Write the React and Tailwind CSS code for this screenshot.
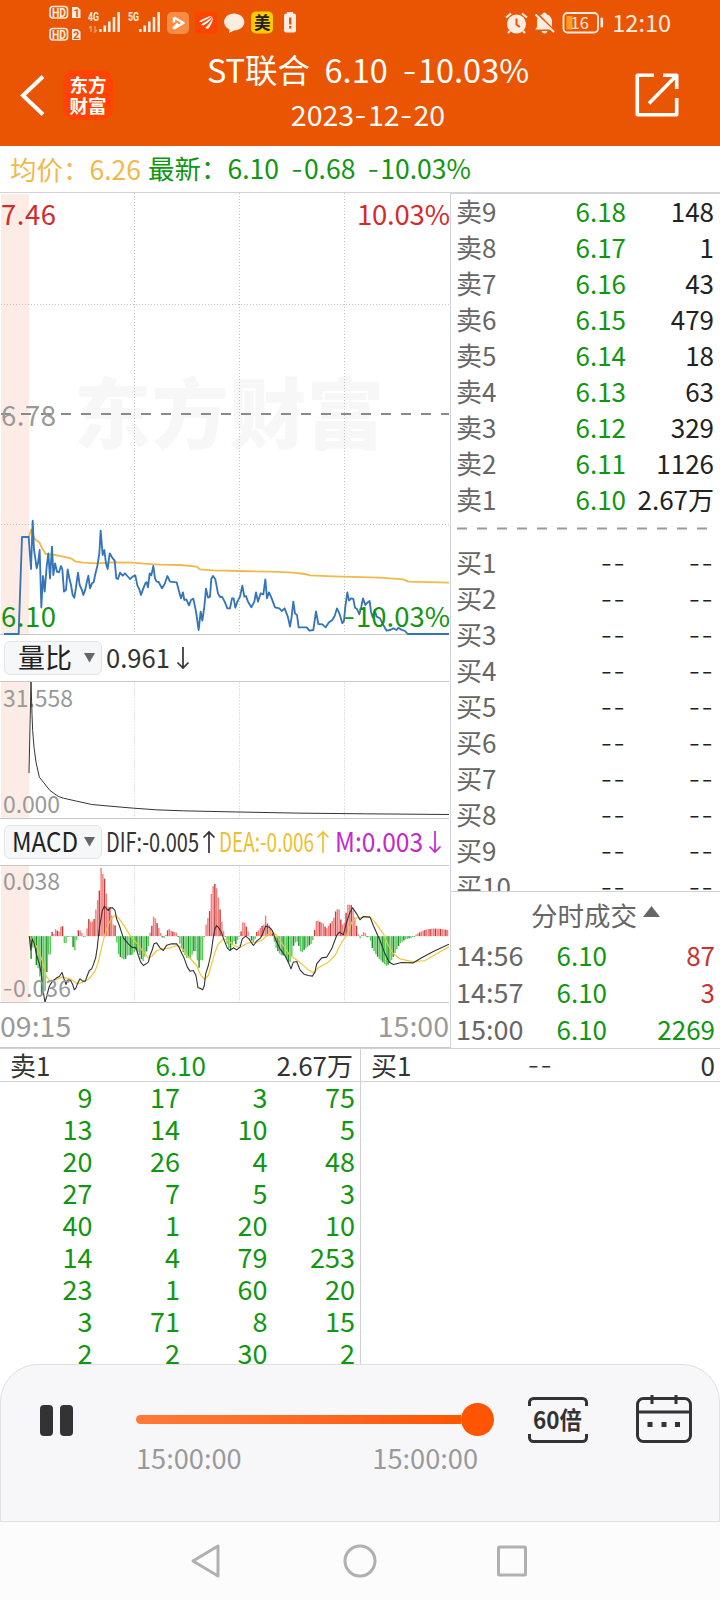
import clsx from 'clsx'

const sells = [
  ['卖9', '6.18', '148'],
  ['卖8', '6.17', '1'],
  ['卖7', '6.16', '43'],
  ['卖6', '6.15', '479'],
  ['卖5', '6.14', '18'],
  ['卖4', '6.13', '63'],
  ['卖3', '6.12', '329'],
  ['卖2', '6.11', '1126'],
  ['卖1', '6.10', '2.67万'],
]

const buys = ['买1', '买2', '买3', '买4', '买5', '买6', '买7', '买8', '买9', '买10']

const deals = [
  { time: '14:56', price: '6.10', vol: '87', up: true },
  { time: '14:57', price: '6.10', vol: '3', up: true },
  { time: '15:00', price: '6.10', vol: '2269', up: false },
]

const queue = [
  [9, 17, 3, 75],
  [13, 14, 10, 5],
  [20, 26, 4, 48],
  [27, 7, 5, 3],
  [40, 1, 20, 10],
  [14, 4, 79, 253],
  [23, 1, 60, 20],
  [3, 71, 8, 15],
  [2, 2, 30, 2],
]

// chart series, three units per pixel
const priceLine = '12,402 56,402 66,111 86,111 93,207 98,62 102,150 106,175 110,205 114,190 119,150 124,322 129,228 134,275 140,200 145,160 150,235 156,140 160,225 165,190 171,215 177,217 183,198 187,208 192,275 198,270 203,208 208,235 213,255 218,285 223,293 228,262 234,218 239,255 245,268 250,285 256,268 260,248 265,227 270,265 276,250 281,247 286,222 292,198 298,160 302,92 308,165 313,150 318,190 323,207 329,160 336,172 344,182 349,235 354,237 360,218 368,227 375,220 382,228 390,237 398,230 406,226 412,256 418,268 423,285 430,265 436,250 440,247 444,262 449,220 454,226 460,198 465,235 470,245 476,246 486,265 494,252 502,228 510,245 530,247 536,270 543,295 549,277 553,300 559,298 567,316 573,300 580,296 588,335 596,390 602,335 607,362 613,320 618,266 624,293 630,290 634,236 639,228 646,238 654,280 660,291 666,290 674,305 682,325 690,325 696,295 701,295 706,323 712,305 720,290 727,257 733,290 738,288 744,305 754,322 763,305 768,277 774,305 782,280 790,283 796,238 801,295 807,277 815,295 825,322 838,325 845,333 854,325 864,352 870,380 875,350 880,305 885,340 891,345 896,382 920,382 928,392 940,390 948,334 955,372 967,373 977,382 987,367 997,360 1004,348 1011,325 1018,340 1027,370 1032,362 1036,320 1042,277 1047,302 1053,295 1060,297 1065,323 1071,327 1078,343 1084,320 1089,295 1096,315 1102,308 1109,303 1113,335 1118,352 1124,330 1130,350 1140,355 1150,375 1160,392 1170,390 1180,385 1190,390 1195,383 1202,388 1215,393 1223,402 1347,402'
const avgLine = '86,112 94,88 100,108 107,120 118,127 128,148 137,162 165,165 190,170 215,176 225,184 250,188 290,190 340,187 400,188 430,191 480,194 540,195 590,200 600,208 640,211 720,213 810,215 880,218 915,222 930,226 1000,229 1140,233 1210,238 1225,245 1347,248'
const ratioLine = '87,308 93,32 96,130 98,180 102,230 108,275 118,320 130,335 150,360 175,378 190,383 230,392 275,402 330,407 400,413 470,418 550,421 690,424 900,428 1100,430 1347,432'
const difLine = '88,257 92,298 97,265 103,280 110,315 118,340 124,370 129,420 135,455 141,435 147,410 152,400 160,390 170,382 178,378 186,366 192,385 198,402 204,388 212,390 218,402 223,418 228,412 233,398 240,385 248,392 256,392 262,375 268,360 275,355 281,340 287,322 292,290 297,240 302,210 307,180 313,167 320,175 325,180 330,172 338,172 345,180 350,205 358,225 370,262 385,280 395,290 408,292 415,315 422,335 430,345 438,340 445,335 450,315 456,300 462,280 470,277 480,292 490,300 500,284 515,280 530,280 537,290 545,308 552,322 562,350 570,362 580,360 588,375 594,412 600,413 608,418 613,405 617,370 625,345 633,310 640,260 645,235 650,225 656,232 664,245 672,268 682,293 690,300 700,292 710,298 720,290 727,265 737,257 747,265 760,285 770,272 782,262 790,245 797,227 808,230 817,240 828,270 840,295 855,315 867,340 873,355 880,335 890,333 900,358 912,371 925,375 937,377 945,365 950,340 965,322 980,320 995,295 1010,255 1018,245 1030,253 1040,215 1050,185 1058,172 1070,190 1080,208 1090,198 1110,200 1120,225 1140,270 1155,310 1168,335 1180,342 1205,336 1240,337 1265,322 1300,303 1347,281'
const deaLine = '88,257 98,272 108,285 118,305 128,335 138,375 148,390 165,388 185,380 210,385 232,400 255,393 270,382 285,362 295,335 305,290 315,250 325,222 335,203 345,195 358,205 375,230 395,262 415,283 430,305 445,322 455,318 470,300 490,295 510,292 530,285 545,292 565,318 590,345 600,370 613,387 625,375 635,340 645,305 655,280 670,265 685,270 700,285 720,291 745,277 765,276 785,270 800,255 815,243 830,255 850,285 870,315 885,325 905,340 925,358 940,367 955,352 985,335 1005,315 1025,275 1040,255 1055,215 1070,202 1110,200 1125,215 1150,250 1165,285 1180,310 1200,325 1240,334 1275,330 1310,310 1347,289'

const macdShape = [
  [88, 0], [93, -70], [98, -35], [103, -25], [108, -85], [114, -95], [119, -115], [124, -175], [134, -177], [139, -125], [145, -55], [151, -55],
  [153, 0], [155, 17], [160, 0], [165, 22], [171, 17], [177, 13], [182, 28], [188, 30], [191, 0], [192, -17], [197, -35], [200, 0], [214, 0],
  [218, -28], [223, -48], [228, -28], [231, 0], [233, 17], [238, 19], [244, 14], [249, 0], [258, 0], [261, 22], [266, 52], [272, 43], [281, 45],
  [287, 77], [292, 104], [298, 137], [302, 209], [308, 188], [313, 179], [318, 136], [324, 88], [329, 88], [334, 66], [340, 35], [345, 37],
  [347, 0], [350, -15], [355, -52], [360, -62], [371, -70], [377, -68], [381, -58], [400, -55], [407, -40], [418, -55], [428, -78], [435, -60],
  [445, -30], [447, 0], [450, 10], [455, 28], [460, 59], [465, 56], [471, 40], [476, 26], [481, 12], [486, -3], [491, -7], [496, 0], [502, 17],
  [508, 21], [515, 15], [530, 10], [535, -5], [541, -28], [550, -48], [560, -65], [573, -65], [580, -45], [588, -45], [596, -100], [603, -70],
  [609, -73], [613, 0], [616, 26], [622, 50], [628, 66], [632, 116], [638, 148], [644, 158], [650, 143], [655, 116], [661, 75], [666, 40],
  [672, 10], [676, 0], [680, -20], [690, -45], [696, -30], [700, -12], [708, -25], [715, -5], [722, 5], [727, 42], [735, 40], [742, 20],
  [748, 5], [752, -10], [760, -18], [766, -8], [770, 12], [778, 20], [785, 30], [792, 35], [796, 65], [802, 38], [808, 32], [815, 20], [820, 0],
  [825, -28], [835, -48], [845, -58], [855, -58], [862, -75], [868, -83], [874, -70], [880, -30], [888, -15], [894, -18], [900, -45],
  [907, -48], [915, -38], [925, -30], [935, -22], [939, -10], [942, 0], [946, 43], [952, 48], [960, 43], [970, 38], [979, 22], [988, 35],
  [1000, 50], [1007, 75], [1013, 82], [1018, 80], [1024, 40], [1030, 32], [1036, 50], [1041, 95], [1055, 93], [1060, 75], [1066, 50],
  [1072, 20], [1078, -10], [1084, 0], [1091, 13], [1097, 8], [1102, -5], [1110, 0], [1114, -30], [1125, -50], [1135, -65], [1150, -80],
  [1160, -90], [1170, -80], [1180, -62], [1190, -40], [1200, -22], [1215, -10], [1235, -4], [1243, 0], [1250, 6], [1265, 15], [1280, 20],
  [1300, 23], [1320, 22], [1347, 18],
]

const macdAt = x => {
  const i = macdShape.findIndex(p => p[0] >= x)
  if (i <= 0) return 0
  const [x0, y0] = macdShape[i - 1]
  const [x1, y1] = macdShape[i]
  return y0 + ((y1 - y0) * (x - x0)) / (x1 - x0)
}

const macdBars = Array.from({ length: 240 }, (_, i) => {
  const x = 88 + i * 5.25
  return { x, v: macdAt(x), dark: i % 3 === 1 }
})

const barColor = ({ v, dark }) => {
  if (v > 0) return dark ? '#c04040' : '#f87c7c'
  return dark ? '#178f22' : '#5cc860'
}

const Dash = ({ children = '-' }) => (
  <span className="font-['Inter',sans-serif] font-light tracking-[1px]">{children}</span>
)

const VerticalGrid = ({ height }) => (
  <g stroke="#c4c4c4" strokeDasharray="1 2">
    <line x1="134.5" x2="134.5" y1="0" y2={height} />
    <line x1="239.5" x2="239.5" y1="0" y2={height} />
    <line x1="344.5" x2="344.5" y1="0" y2={height} />
  </g>
)

const StatusBar = () => (
  <div className="flex h-[46px] items-center justify-between pl-12 pr-[49px] text-[#ffece0]">
    <svg width="252" height="46" viewBox="48 0 252 46" fill="currentColor" fontFamily="Roboto, sans-serif">
      <g fill="none" stroke="currentColor" strokeWidth="1.6">
        <rect x="50" y="6.5" width="17.5" height="11.5" rx="3" />
        <rect x="50" y="28.5" width="17.5" height="11.5" rx="3" />
      </g>
      <text x="52" y="16.5" fontSize="12" fontWeight="700" textLength="14" lengthAdjust="spacingAndGlyphs">HD</text>
      <text x="52" y="38.5" fontSize="12" fontWeight="700" textLength="14" lengthAdjust="spacingAndGlyphs">HD</text>
      <path d="M72 7h5.500l3 2.500V18H72z M72 29h5.500l3 2.500V40H72z" />
      <text x="73.500" y="16.5" fontSize="11" fontWeight="700" fill="#ea5504">1</text>
      <text x="73" y="38.5" fontSize="11" fontWeight="700" fill="#ea5504">2</text>
      <text x="88" y="21" fontSize="12" fontWeight="700" textLength="11" lengthAdjust="spacingAndGlyphs">4G</text>
      <text x="128" y="21" fontSize="12" fontWeight="700" textLength="11" lengthAdjust="spacingAndGlyphs">5G</text>
      <path d="M91 26v6M89 28l2-2M95 26v6l2-2" stroke="currentColor" fill="none" opacity=".5" strokeWidth="1.3" />
      <path d="M99 29h2.600v3H99zM103.500 25.500h2.600v6.500h-2.600zM108 21.500h2.600v10.500h-2.600zM112.700 17h2.600v15h-2.600zM117.400 12h2.600v20h-2.600z" />
      <path d="M139 29h2.600v3H139zM143.500 25.500h2.600v6.500h-2.600zM148 21.500h2.600v10.500h-2.600zM152.700 17h2.600v15h-2.600zM157.400 12h2.600v20h-2.600z" />
      <rect x="167" y="12" width="22" height="22" rx="5" fill="#fa8c46" />
      <path d="M174 17.500l9.500 5.500-9.500 5.500M174 17.500v5M173 28.500l5-5" fill="none" stroke="#fff" strokeWidth="2.4" strokeLinejoin="round" />
      <rect x="195" y="12" width="22" height="22" fill="#ff4400" />
      <path d="M199 21.500q7-5 13-5.500-4 3-11 6zM201 24.500q7-4 11.500-8-2 5-9 9zM205 28q5-4 8-11 0 6-5 12z" fill="#fff" />
      <path d="M234 13.500c5.800 0 10.300 3.800 10.300 8.500s-4.500 8.500-10.300 8.500l-5 2.500.5-3.500c-3-1.500-5.400-4.200-5.400-7.500 0-4.700 4.200-8.500 9.900-8.500z" />
      <rect x="251" y="11.500" width="22" height="22" rx="5" fill="#fc0" />
      <text x="254" y="28.500" fontSize="16.5" fontWeight="700" fill="#222" fontFamily="'Noto Sans CJK SC', sans-serif">美</text>
      <rect x="287" y="12" width="6" height="3" />
      <rect x="284" y="13.500" width="12" height="19" rx="2" />
      <path d="M289 17.500h2.400v7H289zM289 26h2.400v2.400H289z" fill="#ea5504" />
    </svg>

    <div className="flex items-center">
      <svg width="100" height="46" viewBox="507 0 100 46" fill="currentColor">
        <circle cx="518.500" cy="24" r="9.500" />
        <path d="M508 17.500l5-4M529 17.500l-5-4M512 31l-2 2M525 31l2 2" stroke="currentColor" strokeWidth="2.200" />
        <path d="M518.500 18.500v6l3.500 2.500" fill="none" stroke="#ea5504" strokeWidth="2" />
        <path d="M546.500 12.500c1.200 0 2 .8 2 1.800 3.400 1 5.500 3.800 5.500 7.200v5.500l1.800 2.500h-18.600l1.800-2.500v-5.500c0-3.400 2.100-6.200 5.500-7.200 0-1 .8-1.800 2-1.800z" />
        <path d="M543.500 31h6q-.8 2.500-3 2.500t-3-2.500z" />
        <path d="M539.500 14l18 18" stroke="#ea5504" strokeWidth="2.200" />
        <path d="M537.500 14.500L556 32" stroke="currentColor" strokeWidth="2.200" />
        <rect x="565.500" y="13" width="34.500" height="19.500" rx="4" fill="none" stroke="currentColor" strokeWidth="1.800" />
        <rect x="568.500" y="16" width="6" height="13.500" rx="1" fill="#ffa01e" />
        <rect x="602.500" y="17.500" width="2.600" height="10" rx="1" />
        <text x="572.500" y="29" fontSize="16.5" fontFamily="'Noto Sans CJK SC', sans-serif">16</text>
      </svg>
      <span className="ml-[7px] text-[23.5px] leading-none">12:10</span>
    </div>
  </div>
)

const Header = () => (
  <header className="h-[146px] bg-[#ea5504] text-white">
    <StatusBar />
    <div className="flex h-[100px] items-start pl-5 pr-[41px]">
      <div className="flex pt-6">
        <svg width="26" height="52" viewBox="0 0 26 52" fill="none" stroke="#fff" strokeWidth="4">
          <path d="M23 6.500L3 25.500 23 44.500" />
        </svg>
        <div className="ml-[17px] flex size-[50px] flex-col items-center justify-center rounded-xl bg-[#ff4400] text-[18.5px] font-bold leading-[21px]">
          <span>东方</span>
          <span>财富</span>
        </div>
      </div>
      <div className="ml-[73px] w-[364px] text-center">
        <h1 className="h-[48px] whitespace-pre text-[32.5px] leading-[46px]">ST联合  6.10  <Dash />10.03%</h1>
        <p className="text-[28.5px] leading-[40px]">2023<Dash />12<Dash />20</p>
      </div>
      <svg className="ml-auto mt-[27px]" width="44" height="44" viewBox="0 0 44 44" fill="none" stroke="#fff" strokeWidth="3.600" strokeLinejoin="round">
        <path d="M19 2.300H2.300v39.400h39.400V25" />
        <path d="M28 2.300h13.700V16M41 3L14 30.500" />
      </svg>
    </div>
  </header>
)

const PriceChart = () => (
  <svg className="block" width="450" height="442" viewBox="0 193 450 442">
    <rect x="1" y="194" width="28" height="440" fill="#fdece5" />
    <text x="74" y="443" fontSize="77" fontWeight="900" fill="#f7f7f7" textLength="310">东方财富</text>
    <g transform="translate(0 193)"><VerticalGrid height={441} /></g>
    <g stroke="#c4c4c4" strokeDasharray="1 2">
      <line x1="1" x2="449" y1="304.500" y2="304.500" />
      <line x1="1" x2="449" y1="524.500" y2="524.500" />
    </g>
    <line x1="1" x2="449" y1="414" y2="414" stroke="#8a8a8a" strokeWidth="2" strokeDasharray="10 10" strokeDashoffset="0" />
    <line x1="0" x2="449" y1="634.500" y2="634.500" stroke="#c8c8c8" />
    <g transform="translate(0 500) scale(.33333)" fill="none" strokeLinejoin="round">
      <polyline points={avgLine} stroke="#f0b94a" strokeWidth="5.500" />
      <polyline points={priceLine} stroke="#3474b8" strokeWidth="5.500" />
    </g>
    <g fontSize="27.500">
      <text x="1" y="225" fill="#d42a2a" textLength="55">7.46</text>
      <text x="450" y="225" fill="#d42a2a" textAnchor="end" textLength="93">10.03%</text>
      <text x="1" y="425.500" fill="#999" textLength="55">6.78</text>
      <text x="1" y="626.500" fill="#109610" textLength="55">6.10</text>
      <text x="356" y="626.500" fill="#109610" textLength="94">10.03%</text>
      <text x="343" y="626.500" fill="#109610" fontFamily="Inter, sans-serif" fontWeight="300">-</text>
    </g>
  </svg>
)

const RatioChart = () => (
  <svg className="block border-y border-[#c8c8c8]" width="449" height="138" viewBox="0 681.500 449 136">
    <rect x="1" y="681" width="28" height="138" fill="#fdece5" />
    <g transform="translate(0 682)"><VerticalGrid height={136} /></g>
    <g fontSize="23" fill="#999">
      <text x="3" y="706" textLength="70">31.558</text>
      <text x="3" y="812.500" textLength="57">0.000</text>
    </g>
    <polyline transform="translate(0 670) scale(.33333)" points={ratioLine} fill="none" stroke="#333" strokeWidth="3" />
  </svg>
)

const MacdChart = () => (
  <svg className="block border-y border-[#c8c8c8]" width="449" height="138" viewBox="0 865.500 449 136">
    <rect x="1" y="865" width="28" height="138" fill="#fdece5" />
    <g transform="translate(0 866)"><VerticalGrid height={136} /></g>
    <g transform="translate(0 850) scale(.33333)" fill="none" strokeLinejoin="round">
      {macdBars.map(b => (
        <rect
          key={b.x}
          x={b.x - 2.1}
          y={b.v > 0 ? 257 - b.v : 257}
          width="4.300"
          height={Math.max(2, Math.abs(b.v))}
          fill={barColor(b)}
        />
      ))}
      <polyline points={deaLine} stroke="#ecc83a" strokeWidth="3.600" />
      <polyline points={difLine} stroke="#333" strokeWidth="3.300" />
    </g>
    <g fontSize="23" fill="#999">
      <text x="3" y="889.500" textLength="57">0.038</text>
      <text x="13" y="996.500" textLength="58">0.036</text>
      <text x="2.500" y="996.500" fontFamily="Inter, sans-serif" fontWeight="300">-</text>
    </g>
  </svg>
)

const Picker = ({ children, className }) => (
  <div className={clsx('flex h-[34px] w-[98px] flex-none items-center justify-between rounded-md border border-[#e0e2e6] bg-[#f6f7f9] pr-[6px] text-[#222]', className)}>
    {children}
    <svg width="11" height="10" viewBox="0 0 11 10" fill="#666"><path d="M0 0h11L5.500 9.500z" /></svg>
  </div>
)

const Arrow = ({ up }) => (
  <svg className="ml-[2px] flex-none" width="14" height="24" viewBox="0 0 14 24" fill="none" stroke="currentColor" strokeWidth="1.700">
    {up ? <path d="M7 23V2M1.500 7.500L7 2l5.500 5.500" /> : <path d="M7 1v21M1.500 16.500L7 22l5.500-5.500" />}
  </svg>
)

const Narrow = ({ children, width }) => (
  <svg className="flex-none overflow-visible" width={width} height="42" fill="currentColor" fontSize="27">
    <text x="0" y="30.5" textLength={width} lengthAdjust="spacingAndGlyphs">{children}</text>
  </svg>
)

const Charts = () => (
  <section className="w-[450px] flex-none">
    <PriceChart />
    <div className="flex h-[46px] items-center pl-1">
      <Picker className="pl-[13px]"><Narrow width={54}>量比</Narrow></Picker>
      <span className="ml-[4px] text-[#333]"><Narrow width={64}>0.961</Narrow></span>
      <span className="ml-[4px] text-[#333]"><Arrow /></span>
    </div>
    <RatioChart />
    <div className="flex h-[46px] items-center pl-1">
      <Picker className="pl-[7px]"><Narrow width={66}>MACD</Narrow></Picker>
      <div className="ml-[4px] flex items-center text-[#333]"><Narrow width={93}>DIF:-0.005</Narrow><span className="ml-[1px]"><Arrow up /></span></div>
      <div className="ml-[3px] flex items-center text-[#ecc02e]"><Narrow width={95}>DEA:-0.006</Narrow><Arrow up /></div>
      <div className="ml-[5px] flex items-center text-[#c328c8]"><Narrow width={88}>M:0.003</Narrow><span className="ml-[3px]"><Arrow /></span></div>
    </div>
    <MacdChart />
    <div className="flex h-[45px] items-center justify-between border-b border-[#c8c8c8] pr-[1px] text-[28.5px] leading-[40px] text-[#999]">
      <span>09:15</span>
      <span>15:00</span>
    </div>
  </section>
)

const BookRow = ({ label, price, vol }) => (
  <div className="flex h-9 items-start text-[26px] leading-[33px]">
    <span className="w-[80px] text-[#666]">{label}</span>
    <span className="w-[90px] text-right text-[#109610]">{price}</span>
    <span className="flex-1 text-right text-[#222]">{vol}</span>
  </div>
)

const OrderBook = () => (
  <section className="flex min-w-0 flex-1 flex-col border-l border-t border-[#d2d4d9]">
    <div className="h-[698px] overflow-hidden border-b border-[#d2d2d2] pl-[5px] pr-[6px]">
      {sells.map(([label, price, vol]) => (
        <BookRow key={label} label={label} price={price} vol={vol} />
      ))}
      <svg className="block" width="258" height="27" stroke="#999" strokeWidth="2" strokeDasharray="10 10">
        <line x1="1" x2="252" y1="10.500" y2="10.500" />
      </svg>
      {buys.map(label => (
        <BookRow
          key={label}
          label={label}
          price={<span className="text-[#222]"><Dash>--</Dash></span>}
          vol={<Dash>--</Dash>}
        />
      ))}
    </div>
    <div className="flex h-[45px] items-center justify-center pl-[20px] text-[26.5px] leading-[40px] text-[#666]">
      分时成交
      <svg className="mb-[6px] ml-[6px]" width="17" height="11" viewBox="0 0 17 11" fill="#666"><path d="M0 11L8.500 0 17 11z" /></svg>
    </div>
    {deals.map(d => (
      <div key={d.time} className="flex h-[37px] items-center pb-[1px] pl-[5px] pr-[5px] text-[26px] leading-[36px]">
        <span className="w-[80px] text-[27px] text-[#666]">{d.time}</span>
        <span className="w-[71px] text-right text-[#109610]">{d.price}</span>
        <span className={clsx('flex-1 text-right', d.up ? 'text-[#c83232]' : 'text-[#109610]')}>{d.vol}</span>
      </div>
    ))}
  </section>
)

const Queue = () => (
  <section className="flex h-[316px] overflow-hidden border-t border-[#d2d2d2] text-[26px]">
    <div className="w-[361px] flex-none border-r border-[#d2d2d2]">
      <div className="flex h-[33px] items-center border-b border-[#d2d2d2] pl-[10px] pr-[7px] leading-[30px] text-[#333]">
        <span className="w-[80px]">卖1</span>
        <span className="w-[116px] text-right text-[#109610]">6.10</span>
        <span className="flex-1 text-right">2.67万</span>
      </div>
      {queue.map((row, i) => (
        <div key={i} className="flex h-8 items-start pl-[5px] text-right text-[27px] leading-[30px] text-[#109610]">
          {row.map((n, j) => <span key={j} className="w-[87.5px]">{n}</span>)}
        </div>
      ))}
    </div>
    <div className="flex h-[33px] flex-1 items-center border-b border-[#d2d2d2] pl-[10px] pr-[5px] leading-[30px] text-[#333]">
      <span className="w-[80px]">买1</span>
      <span className="w-[102px] text-right"><Dash>--</Dash></span>
      <span className="flex-1 text-right">0</span>
    </div>
  </section>
)

const Player = () => (
  <section className="flex h-[158px] rounded-t-[38px] border border-[#dfe0e2] bg-[#f7f7fa] pl-[39px] pt-[30px]">
    <svg className="mt-[10px] flex-none" width="33" height="31" viewBox="0 0 33 31" fill="#333">
      <rect width="13" height="31" rx="4" />
      <rect x="20" width="13" height="31" rx="4" />
    </svg>
    <div className="-mt-[2px] ml-[63px] w-[358px]">
      <div className="flex h-[52px] items-center">
        <div className="h-[9px] w-[325px] rounded-l-full bg-linear-to-r from-[#ff7a35] to-[#ff5500]" />
        <div className="size-[33px] rounded-full bg-[#ff5500]" />
      </div>
      <div className="flex w-[342px] justify-between text-[27.2px] leading-[24px] text-[#999]">
        <span>15:00:00</span>
        <span>15:00:00</span>
      </div>
    </div>
    <svg className="ml-[34px] mt-[2px] flex-none" width="60" height="46" viewBox="0 0 60 46" fill="none" stroke="#333" strokeWidth="3">
      <path d="M1.500 9V5.500a4 4 0 0 1 4-4h49a4 4 0 0 1 4 4V9M1.500 37v3.500a4 4 0 0 0 4 4h49a4 4 0 0 0 4-4V37" />
      <text x="5" y="32" fontSize="23.5" fontWeight="700" fill="#333" stroke="none" textLength="49" lengthAdjust="spacingAndGlyphs">60倍</text>
    </svg>
    <svg className="ml-[48px] flex-none" width="56" height="48" viewBox="0 0 56 48" fill="none" stroke="#333" strokeWidth="3">
      <rect x="1.500" y="3.500" width="53" height="43" rx="6" />
      <path d="M2 17h52M16 0v9M40 0v9" />
      <path d="M11.500 29.500h5M25.500 29.500h5M39 29.500h5" strokeWidth="5" />
    </svg>
  </section>
)

const NavBar = () => (
  <nav className="flex h-[78px] justify-center bg-[#fcfcfc] pt-[21px]">
    <svg width="340" height="36" viewBox="190 1543 340 36" fill="none" stroke="#b0b0b0" strokeWidth="3" strokeLinejoin="round">
      <path d="M218 1546v30L193 1561z" />
      <circle cx="360" cy="1561" r="15" />
      <rect x="498.500" y="1547" width="27" height="28" rx="1" />
    </svg>
  </nav>
)

export default function App() {
  return (
    <main className="h-[1600px] w-[720px] overflow-hidden bg-white font-['Noto_Sans_CJK_SC',sans-serif]">
      <Header />
      <div className="flex h-[47px] items-center whitespace-pre border-b border-[#d2d4d9] pl-[10px] text-[26.5px]">
        <span className="w-[138px] text-[#f0b94a]">均价：6.26</span>
        <span className="text-[#109610]">最新：6.10  <Dash />0.68  <Dash />10.03%</span>
      </div>
      <div className="flex h-[855px]">
        <Charts />
        <OrderBook />
      </div>
      <Queue />
      <Player />
      <NavBar />
    </main>
  )
}
